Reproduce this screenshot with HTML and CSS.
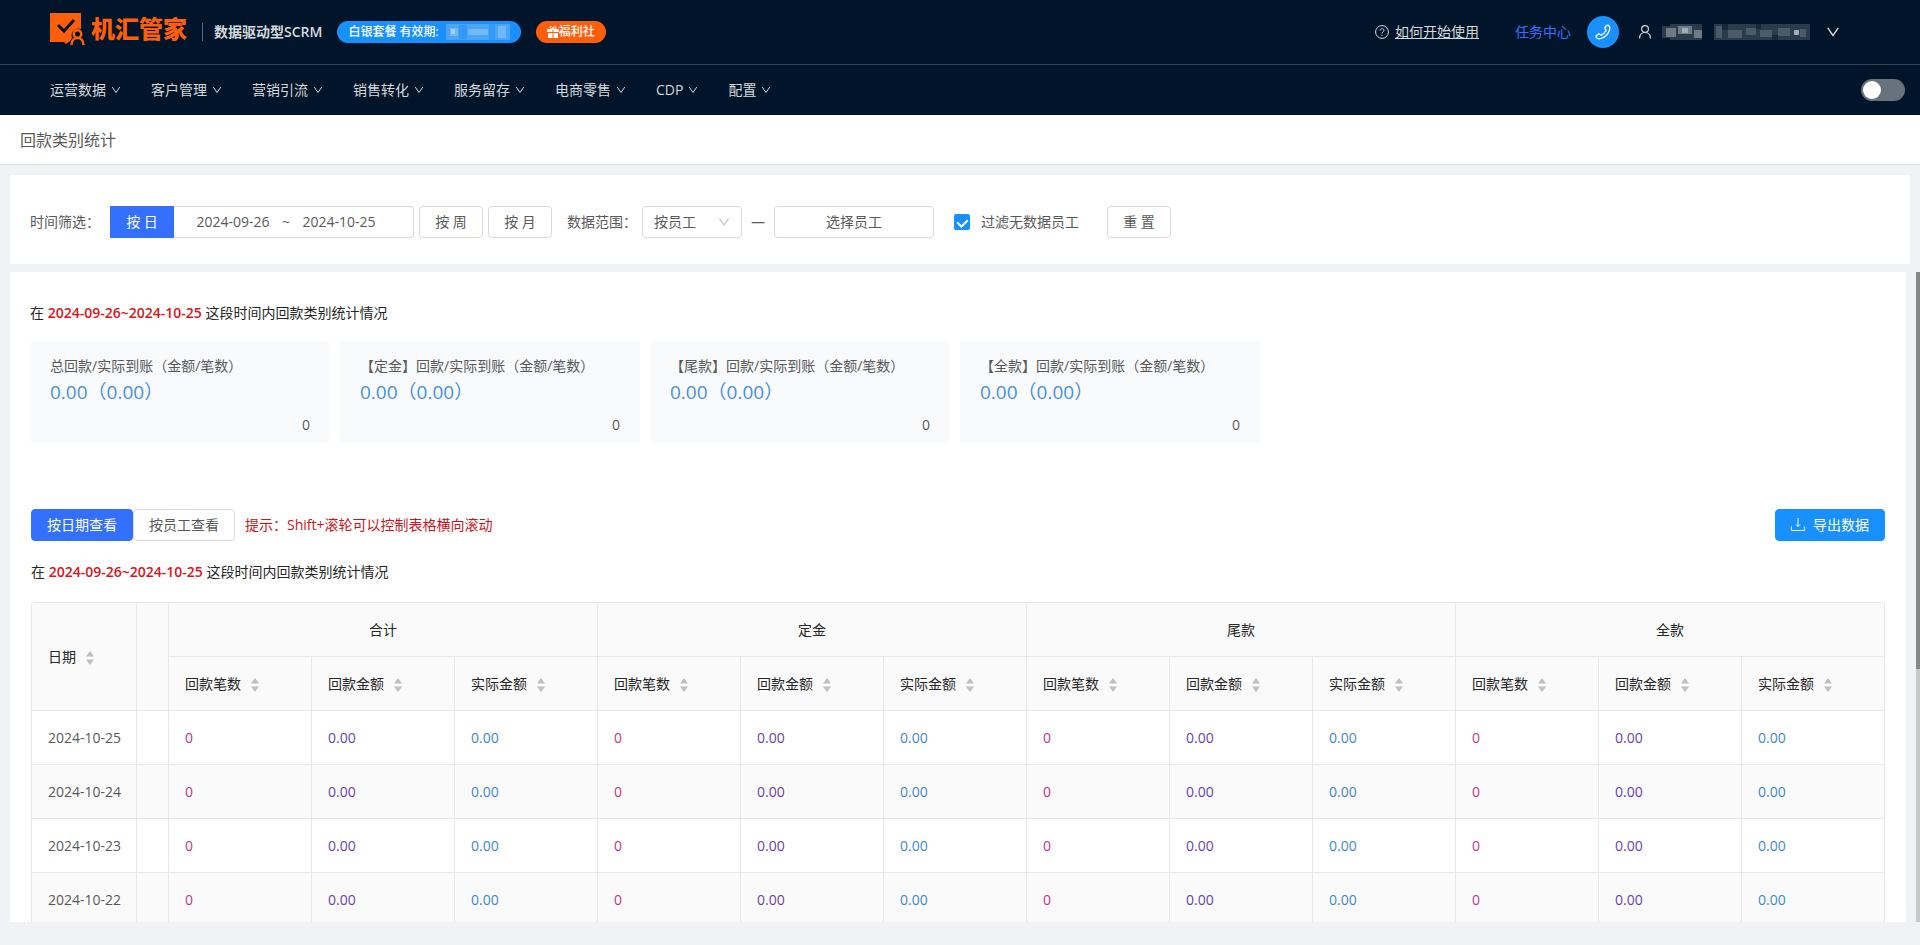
FILE: index.html
```html
<!DOCTYPE html>
<html lang="zh-CN">

<head>
    <meta charset="utf-8">
    <title>回款类别统计</title>
    <meta name="viewport" content="width=device-width, initial-scale=1">
    <link rel="stylesheet" href="styles.css">
</head>

<body>
    <svg class="defs">
        <symbol id="down" viewBox="0 0 12 12">
            <path d="M1.5 2.5 6 9l4.500-6.500" fill="none" stroke="currentColor" stroke-width="1.200" />
        </symbol>
        <symbol id="sort" viewBox="0 0 8 14">
            <path d="M4 0l4 5.500H0zM4 14l4-5.500H0z" fill="currentColor" />
        </symbol>
    </svg>

    <header class="top">
        <a class="logo" href="#">
            <svg width="36" height="34" viewBox="0 0 36 34">
                <path d="M0 1h31v16a7 7 0 0 0-9 9l-2 3-4 3-2-2H0z" fill="#ff5f0a" />
                <path d="M8 13l6 6 10-11" fill="none" stroke="#001529" stroke-width="3" />
                <circle cx="27.500" cy="22" r="3.800" fill="none" stroke="#ff5f0a" stroke-width="2.500" />
                <path d="M21.500 33c0-5 3-7 6-7s6 2 6 7" fill="none" stroke="#ff5f0a" stroke-width="2.500" />
            </svg>
            <span class="brand">机汇管家</span>
        </a>
        <span class="slogan">数据驱动型SCRM</span>
        <span class="pill">白银套餐 有效期:
            <svg width="64" height="16" viewBox="0 0 64 16">
                <path d="M0 0h64v16H0z" fill="#4ca4f4" />
                <path d="M4 4h8v8H4zM22 5h20v6H22zM52 2h8v12h-8z" fill="#73b8f6" />
                <path d="M13 1h8v14h-8zM43 0h6v16h-6z" fill="#3399f6" />
                <path d="M5 5h4v5H5z" fill="#a5d1f8" />
            </svg>
        </span>
        <a class="pill gift" href="#">
            <svg width="12" height="12" viewBox="0 0 12 12">
                <path d="M0 3h5.500v3H0zM6.500 3H12v3H6.500zM1 7h4.500v5H1zM6.500 7H11v5H6.500z" fill="#fff" />
                <path d="M6 3C4 3 2.500 2.500 3 1s2.500-.5 3 2c.5-2.500 2.500-3.500 3-2s-1 2-3 2z" fill="none" stroke="#fff" />
            </svg>福利社</a>

        <div class="user-bar">
            <a class="help" href="#">
                <svg width="14" height="14" viewBox="0 0 14 14" fill="none" stroke="currentColor">
                    <circle cx="7" cy="7" r="6.400" />
                    <path d="M5 5.600C5 3 9 3 9 5.500c0 1.500-2 1.300-2 3M7 9.700v1.100" />
                </svg>
                <span>如何开始使用</span>
            </a>
            <a class="task" href="#">任务中心</a>
            <button class="phone" type="button" aria-label="电话">
                <svg width="16" height="16" viewBox="0 0 16 16">
                    <path d="M11.500 1.500c2.500-1 4 1.500 3 4.500C13.200 10 10 13.200 6 14.500c-3 1-5.500-.5-4.500-3l2.500-1.800 2.300 1.500c2-1 3.900-2.900 4.900-4.900L9.700 4z" fill="none" stroke="#fff" stroke-width="1.300" stroke-linejoin="round" />
                </svg>
            </button>
            <button class="account" type="button" aria-label="账号">
                <svg width="12" height="14" viewBox="0 0 12 14" fill="none" stroke="currentColor" stroke-width="1.200">
                    <circle cx="6" cy="4" r="3.400" />
                    <path d="M.6 13.500C.6 9.500 3 7.500 6 7.500s5.400 2 5.400 6" />
                </svg>
                <svg class="mask" width="148" height="16" viewBox="0 0 148 16">
                    <path d="M0 2h8v12H0zM8 0h32v16H8zM52 0h96v16H52z" fill="#2a3b4c" />
                    <path d="M4 4h10v9H4zM16 2h14v8H16zM32 6h8v8h-8z" fill="#6f7a85" />
                    <path d="M54 2h6v12h-6zM66 6h14v8H66zM84 4h10v7H84zM98 6h12v7H98zM116 4h12v8h-12zM138 5h6v8h-6z" fill="#4d5b69" />
                    <path d="M20 4h6v5h-6zM132 6h5v5h-5z" fill="#a3abb3" />
                    <path d="M60 0h6v6h-6zM94 0h5v5h-5zM110 11h6v5h-6z" fill="#16293c" />
                </svg>
                <svg width="14" height="14"><use href="#down" /></svg>
            </button>
        </div>
    </header>

    <nav class="menu">
        <a href="#">运营数据<svg><use href="#down" /></svg></a>
        <a href="#">客户管理<svg><use href="#down" /></svg></a>
        <a href="#">营销引流<svg><use href="#down" /></svg></a>
        <a href="#">销售转化<svg><use href="#down" /></svg></a>
        <a href="#">服务留存<svg><use href="#down" /></svg></a>
        <a href="#">电商零售<svg><use href="#down" /></svg></a>
        <a href="#">CDP<svg><use href="#down" /></svg></a>
        <a href="#">配置<svg><use href="#down" /></svg></a>
        <input class="switch" type="checkbox" role="switch" aria-label="切换主题">
    </nav>

    <h1 class="page-title">回款类别统计</h1>

    <form class="filter">
        <span class="time-label">时间筛选：</span>
        <button class="btn day" type="button">按 日</button>
        <div class="range">
            <input type="text" value="2024-09-26" aria-label="开始日期">
            <span>~</span>
            <input type="text" value="2024-10-25" aria-label="结束日期">
        </div>
        <button class="btn week" type="button">按 周</button>
        <button class="btn month" type="button">按 月</button>
        <label class="scope-label" for="scope">数据范围：</label>
        <div class="select">
            <select id="scope">
                <option>按员工</option>
            </select>
            <svg width="12" height="12"><use href="#down" /></svg>
        </div>
        <span class="dash">—</span>
        <button class="btn staff" type="button">选择员工</button>
        <label class="check"><input type="checkbox" checked>过滤无数据员工</label>
        <button class="btn reset" type="reset">重 置</button>
    </form>

    <div class="scroller">
        <main class="content">
            <p class="summary">在 <b>2024-09-26~2024-10-25</b> 这段时间内回款类别统计情况</p>
            <div class="cards">
                <section class="card">
                    <h2>总回款/实际到账（金额/笔数）</h2>
                    <p class="amount">0.00（0.00）</p>
                    <p class="count">0</p>
                </section>
                <section class="card">
                    <h2>【定金】回款/实际到账（金额/笔数）</h2>
                    <p class="amount">0.00（0.00）</p>
                    <p class="count">0</p>
                </section>
                <section class="card">
                    <h2>【尾款】回款/实际到账（金额/笔数）</h2>
                    <p class="amount">0.00（0.00）</p>
                    <p class="count">0</p>
                </section>
                <section class="card">
                    <h2>【全款】回款/实际到账（金额/笔数）</h2>
                    <p class="amount">0.00（0.00）</p>
                    <p class="count">0</p>
                </section>
            </div>

            <section class="detail">
                <div class="toolbar">
                    <button class="btn active" type="button">按日期查看</button>
                    <button class="btn" type="button">按员工查看</button>
                    <span class="tip">提示：Shift+滚轮可以控制表格横向滚动</span>
                    <button class="btn export" type="button">
                        <svg width="14" height="14" viewBox="0 0 14 14" fill="none" stroke="currentColor">
                            <path d="M7 0v8.500M5 6.500l2 2 2-2M.5 8.500v4h13v-4" />
                        </svg>导出数据</button>
                </div>
                <p class="summary">在 <b>2024-09-26~2024-10-25</b> 这段时间内回款类别统计情况</p>
                <table class="data">
                    <colgroup>
                        <col class="col-date">
                        <col class="col-blank">
                        <col span="12">
                    </colgroup>
                    <thead>
                        <tr>
                            <th rowspan="2">日期<svg><use href="#sort" /></svg></th>
                            <th rowspan="2"></th>
                            <th class="group" colspan="3">合计</th>
                            <th class="group" colspan="3">定金</th>
                            <th class="group" colspan="3">尾款</th>
                            <th class="group" colspan="3">全款</th>
                        </tr>
                        <tr>
                            <th>回款笔数<svg><use href="#sort" /></svg></th>
                            <th>回款金额<svg><use href="#sort" /></svg></th>
                            <th>实际金额<svg><use href="#sort" /></svg></th>
                            <th>回款笔数<svg><use href="#sort" /></svg></th>
                            <th>回款金额<svg><use href="#sort" /></svg></th>
                            <th>实际金额<svg><use href="#sort" /></svg></th>
                            <th>回款笔数<svg><use href="#sort" /></svg></th>
                            <th>回款金额<svg><use href="#sort" /></svg></th>
                            <th>实际金额<svg><use href="#sort" /></svg></th>
                            <th>回款笔数<svg><use href="#sort" /></svg></th>
                            <th>回款金额<svg><use href="#sort" /></svg></th>
                            <th>实际金额<svg><use href="#sort" /></svg></th>
                        </tr>
                    </thead>
                    <tbody>
                        <tr>
                            <td>2024-10-25</td>
                            <td></td>
                            <td class="num">0</td><td class="due">0.00</td><td class="paid">0.00</td>
                            <td class="num">0</td><td class="due">0.00</td><td class="paid">0.00</td>
                            <td class="num">0</td><td class="due">0.00</td><td class="paid">0.00</td>
                            <td class="num">0</td><td class="due">0.00</td><td class="paid">0.00</td>
                        </tr>
                        <tr>
                            <td>2024-10-24</td>
                            <td></td>
                            <td class="num">0</td><td class="due">0.00</td><td class="paid">0.00</td>
                            <td class="num">0</td><td class="due">0.00</td><td class="paid">0.00</td>
                            <td class="num">0</td><td class="due">0.00</td><td class="paid">0.00</td>
                            <td class="num">0</td><td class="due">0.00</td><td class="paid">0.00</td>
                        </tr>
                        <tr>
                            <td>2024-10-23</td>
                            <td></td>
                            <td class="num">0</td><td class="due">0.00</td><td class="paid">0.00</td>
                            <td class="num">0</td><td class="due">0.00</td><td class="paid">0.00</td>
                            <td class="num">0</td><td class="due">0.00</td><td class="paid">0.00</td>
                            <td class="num">0</td><td class="due">0.00</td><td class="paid">0.00</td>
                        </tr>
                        <tr>
                            <td>2024-10-22</td>
                            <td></td>
                            <td class="num">0</td><td class="due">0.00</td><td class="paid">0.00</td>
                            <td class="num">0</td><td class="due">0.00</td><td class="paid">0.00</td>
                            <td class="num">0</td><td class="due">0.00</td><td class="paid">0.00</td>
                            <td class="num">0</td><td class="due">0.00</td><td class="paid">0.00</td>
                        </tr>
                    </tbody>
                </table>
            </section>
        </main>
        <div class="scrollbar">
            <div class="thumb"></div>
        </div>
    </div>
</body>

</html>
```

FILE: styles.css
```css
* {
    box-sizing: border-box;
}

body {
    display: flex;
    flex-direction: column;
    height: 100vh;
    margin: 0;
    overflow: hidden;
    background: #f0f2f5;
    color: #595959;
    font-family: "Open Sans", "Noto Sans CJK SC", sans-serif;
    font-size: 14px;
    line-height: 22px;
}

h1,
h2,
p {
    margin: 0;
    font-weight: normal;
}

a {
    color: inherit;
    text-decoration: none;
}

button,
input,
select {
    margin: 0;
    font: inherit;
    color: inherit;
}

svg {
    flex: none;
}

.defs {
    position: absolute;
    width: 0;
    height: 0;
}

/* 顶部 */
.top {
    display: flex;
    flex: none;
    align-items: center;
    height: 65px;
    padding: 0 80px 0 50px;
    background: #001529;
    border-bottom: 1px solid #354452;
    color: #d5d9dd;
}

.logo {
    display: flex;
    align-items: center;
    align-self: flex-start;
    gap: 5px;
    height: 58px;
    color: #ff5f0a;
}

.brand {
    font-size: 24px;
    font-weight: 900;
    line-height: 24px;
}

.slogan {
    margin-left: 15px;
    padding-left: 11px;
    border-left: 1px solid #5c6875;
    font-weight: 600;
    line-height: 18px;
}

.pill {
    display: flex;
    align-items: center;
    gap: 7px;
    height: 22px;
    margin-left: 15px;
    padding: 0 11px;
    border-radius: 11px;
    background: #1890ff;
    color: #fff;
    font-size: 12px;
    font-weight: 500;
}

.gift {
    gap: 0;
    background: #ff5f0a;
}

.user-bar {
    display: flex;
    align-items: center;
    margin-left: auto;
}

.help {
    display: flex;
    align-items: center;
    gap: 6px;
}

.help span {
    text-decoration: underline;
}

.task {
    margin: 0 16px 0 36px;
    color: #3370ff;
}

.phone {
    display: flex;
    align-items: center;
    justify-content: center;
    width: 32px;
    height: 32px;
    padding: 0;
    border: 0;
    border-radius: 50%;
    background: #1890ff;
}

.account {
    display: flex;
    align-items: center;
    margin-left: 20px;
    padding: 0;
    border: 0;
    background: none;
}

.mask {
    margin: 0 16px 0 11px;
}

.menu {
    display: flex;
    flex: none;
    align-items: center;
    gap: 30px;
    height: 50px;
    padding: 0 15px 0 50px;
    background: #001529;
    color: #d5d9dd;
}

.menu a {
    display: flex;
    align-items: center;
    gap: 5px;
}

.menu svg {
    width: 10px;
    height: 10px;
}

.switch {
    display: flex;
    align-items: center;
    width: 44px;
    height: 22px;
    margin-left: auto;
    padding: 2px;
    border-radius: 11px;
    background: #66737f;
    appearance: none;
}

.switch::before {
    content: "";
    width: 18px;
    height: 18px;
    border-radius: 50%;
    background: #fff;
}

.page-title {
    flex: none;
    height: 50px;
    padding: 0 20px;
    background: #fff;
    border-bottom: 1px solid #dfe1e4;
    font-size: 16px;
    line-height: 50px;
}

/* 筛选 */
.btn {
    height: 32px;
    padding: 0 15px;
    border: 1px solid #d9d9d9;
    border-radius: 4px;
    background: #fff;
    white-space: nowrap;
}

.filter {
    display: flex;
    flex: none;
    align-items: center;
    height: 89px;
    margin: 10px 10px 8px;
    padding: 5px 20px 0;
    background: #fff;
}

.time-label {
    width: 80px;
}

.day {
    width: 64px;
    border-color: #3370ff;
    border-radius: 0;
    background: #3370ff;
    color: #fff;
}

.range {
    display: flex;
    align-items: center;
    width: 240px;
    height: 32px;
    padding-left: 15px;
    border: 1px solid #d9d9d9;
    border-left: 0;
    border-radius: 0 4px 4px 0;
}

.range input {
    width: 88px;
    padding: 0;
    border: 0;
    background: none;
    text-align: center;
}

.range span {
    width: 18px;
    text-align: center;
}

.week,
.month,
.reset {
    width: 64px;
}

.week {
    margin: 0 5px;
}

.scope-label {
    width: 75px;
    margin-left: 15px;
}

.select {
    position: relative;
    width: 100px;
}

.select select {
    width: 100%;
    height: 32px;
    padding: 0 11px;
    border: 1px solid #d9d9d9;
    border-radius: 4px;
    background: #fff;
    appearance: none;
}

.select svg {
    position: absolute;
    top: 10px;
    right: 12px;
    color: #bfbfbf;
}

.dash {
    width: 32px;
    text-align: center;
}

.staff {
    width: 160px;
}

.check {
    display: flex;
    align-items: center;
    gap: 11px;
    margin: 0 28px 0 20px;
}

.check input {
    display: flex;
    justify-content: center;
    width: 16px;
    height: 16px;
    padding-top: 3px;
    border-radius: 2px;
    background: #1890ff;
    appearance: none;
}

.check input:checked::before {
    content: "";
    width: 5px;
    height: 8px;
    border: solid #fff;
    border-width: 0 2px 2px 0;
    transform: rotate(45deg);
}

/* 内容区 */
.scroller {
    display: flex;
    flex: 1;
    justify-content: space-between;
    min-height: 0;
    margin: 0 0 23px 10px;
}

.content {
    flex: 1;
    margin-right: 10px;
    padding: 30px 20px 0;
    overflow: hidden;
    background: #fff;
}

.scrollbar {
    width: 4px;
    background: #c9c9c9;
}

.thumb {
    height: 61%;
    background: #888;
}

.summary {
    color: #262626;
}

.summary b {
    color: #d9161a;
    font-weight: 600;
}

.cards {
    display: flex;
    gap: 10px;
    margin-top: 17px;
}

.card {
    width: 300px;
    height: 102px;
    padding: 14px 20px 0;
    border-radius: 4px;
    background: #f8fafc;
}

.card h2 {
    font-size: 14px;
    white-space: nowrap;
}

.amount {
    color: #4a90d9;
    font-size: 19px;
    line-height: 30px;
}

.count {
    margin-top: 7px;
    text-align: right;
}

.detail {
    margin: 66px 1px 0;
}

.toolbar {
    display: flex;
    align-items: center;
    margin-bottom: 20px;
}

.active {
    border-color: #3370ff;
    background: #3370ff;
    color: #fff;
}

.tip {
    margin-left: 10px;
    color: #c4161c;
}

.export {
    display: flex;
    align-items: center;
    justify-content: center;
    gap: 8px;
    margin-left: auto;
    border-color: #1890ff;
    background: #1890ff;
    color: #fff;
}

.data {
    width: 100%;
    margin-top: 19px;
    border: 1px solid #e8e8e8;
    border-width: 1px 0 0 1px;
    border-radius: 4px 4px 0 0;
    border-spacing: 0;
    table-layout: fixed;
}

.col-date {
    width: 105px;
}

.col-blank {
    width: 32px;
}

.data th,
.data td {
    height: 54px;
    padding: 0 16px;
    border: solid #e8e8e8;
    border-width: 0 1px 1px 0;
    text-align: left;
    white-space: nowrap;
}

.data th {
    background: #fafafa;
    color: #262626;
    font-weight: normal;
}

.data .group {
    text-align: center;
}

.data th svg {
    width: 8px;
    height: 14px;
    margin-left: 10px;
    color: #bfbfbf;
    vertical-align: -3px;
}

.data tbody tr:nth-child(even) {
    background: #fafafa;
}

.data .num {
    color: #c2338b;
}

.data .due {
    color: #6a3fa8;
}

.data .paid {
    color: #3f87c6;
}
```
